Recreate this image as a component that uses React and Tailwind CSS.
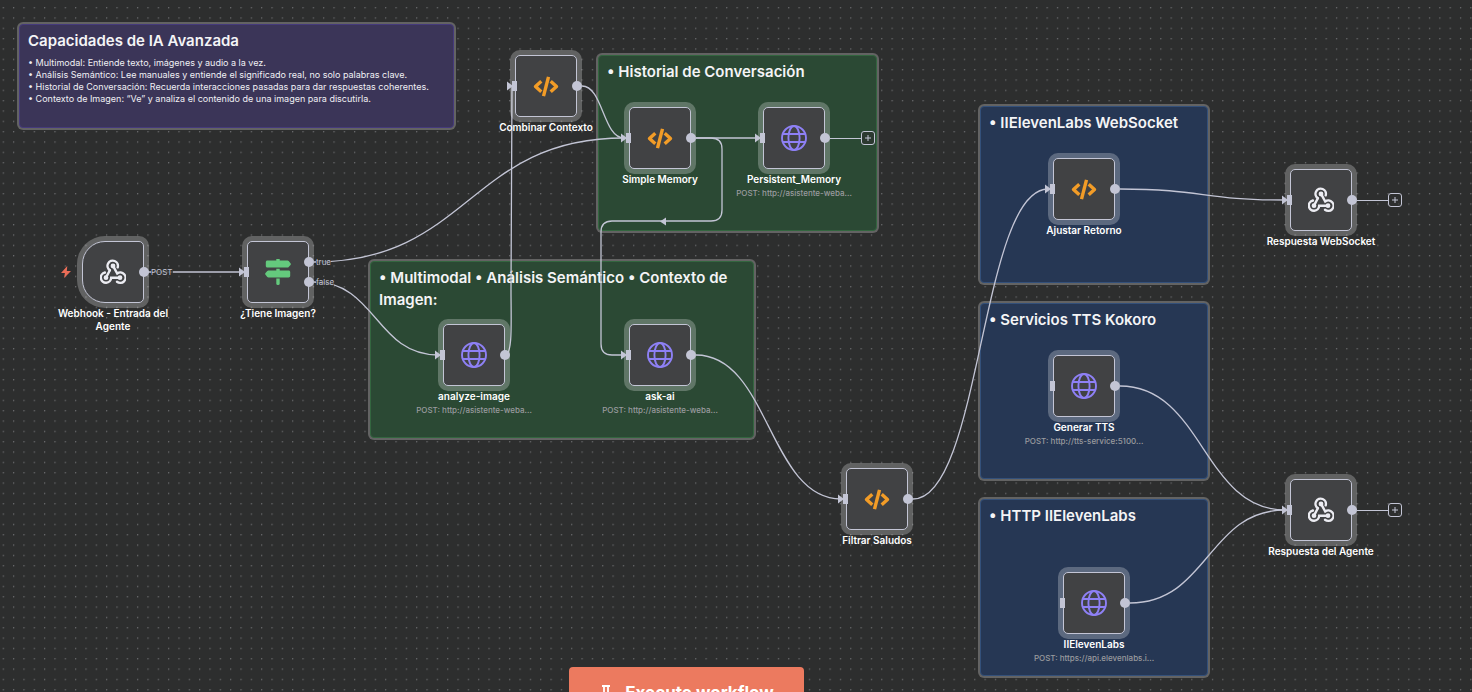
import React from "react";

const NODES = [
  { id: "webhook", x: 82, y: 241, icon: "webhook", label: "Webhook - Entrada del Agente", trigger: true, outputs: ["POST"] },
  { id: "if", x: 247, y: 241, icon: "signs", label: "¿Tiene Imagen?", outputs: ["true", "false"], arrow: true },
  { id: "combine", x: 515, y: 55, icon: "code", label: "Combinar Contexto", arrow: true },
  { id: "simple", x: 629, y: 107, icon: "code", label: "Simple Memory", arrow: true },
  { id: "persistent", x: 763, y: 107, icon: "globe", label: "Persistent_Memory", sub: "POST: http://asistente-weba...", arrow: true, add: true },
  { id: "analyze", x: 443, y: 324, icon: "globe", label: "analyze-image", sub: "POST: http://asistente-weba...", arrow: true },
  { id: "ask", x: 629, y: 324, icon: "globe", label: "ask-ai", sub: "POST: http://asistente-weba...", arrow: true },
  { id: "filter", x: 846, y: 468, icon: "code", label: "Filtrar Saludos", arrow: true },
  { id: "adjust", x: 1053, y: 158, icon: "code", label: "Ajustar Retorno", arrow: true },
  { id: "tts", x: 1053, y: 355, icon: "globe", label: "Generar TTS", sub: "POST: http://tts-service:5100..." },
  { id: "eleven", x: 1063, y: 572, icon: "globe", label: "IIElevenLabs", sub: "POST: https://api.elevenlabs.i..." },
  { id: "replyWs", x: 1290, y: 169, icon: "webhook", label: "Respuesta WebSocket", arrow: true, add: true },
  { id: "reply", x: 1290, y: 479, icon: "webhook", label: "Respuesta del Agente", arrow: true, add: true },
];

const EDGES = [
  "M148 272 H242",
  "M314 262 C469 262 469 138 624 138",
  "M314 282 C376 282 376 355 438 355",
  "M582 86 C603 86 603 138 624 138",
  "M696 138 H758",
  "M696 138 H711 Q722 138 722 149 V210 Q722 221 711 221 H612 Q601 221 601 232 V344 Q601 355 612 355 H624",
  "M505 355 C513 355 511 320 511 290 L512 86",
  "M696 355 C769 355 769 499 841 499",
  "M913 499 C981 499 981 189 1048 189",
  "M1120 189 C1203 189 1203 200 1285 200",
  "M1120 386 C1203 386 1203 510 1285 510",
  "M1130 603 C1208 603 1208 510 1285 510",
];

function Icon({ name }) {
  if (name === "code")
    return (
      <svg viewBox="0 0 26 21" className="h-[21px] w-[26px]" fill="none" stroke="#f29c27" strokeWidth="3.400" aria-hidden="true">
        <path d="M8.300 5.200L2.500 10.500L8.300 15.800M17.700 5.200L23.500 10.500L17.700 15.800" strokeLinejoin="round" />
        <path d="M15.500 0.800L10.500 20.200" />
      </svg>
    );
  if (name === "globe")
    return (
      <svg viewBox="0 0 26 26" className="size-[26px]" fill="none" stroke="#8e80f5" strokeWidth="1.900" aria-hidden="true">
        <circle cx="13" cy="13" r="12" />
        <ellipse cx="13" cy="13" rx="5.600" ry="12" />
        <path d="M1.700 9h22.600M1.700 17h22.600" />
      </svg>
    );
  if (name === "signs")
    return (
      <svg viewBox="0 0 26 26" className="size-[26px]" fill="#64ca7d" aria-hidden="true">
        <path d="M11.300 0h3.400v1.600h7.900c.4 0 .8.200 1.100.5l1.800 2.100c.5.500.5 1.200 0 1.700l-1.800 2c-.3.400-.7.600-1.100.6H2.400c-.9 0-1.600-.7-1.600-1.500V3.200c0-.9.700-1.600 1.600-1.600h8.900zM11.300 9.800h3.400v1.700h8.900c.9 0 1.600.7 1.600 1.600v3.700c0 .9-.7 1.600-1.600 1.600H3.400c-.4 0-.8-.2-1.100-.5L.5 15.800c-.5-.5-.5-1.200 0-1.700l1.800-2.100c.3-.3.700-.5 1.100-.5h7.900zM11.300 19.600h3.400v5.200c0 .7-.5 1.200-1.200 1.200h-1c-.7 0-1.200-.5-1.200-1.200z" />
      </svg>
    );
  return (
    <svg viewBox="0 0 26 26" className="size-[26px]" fill="none" stroke="#ececf2" strokeWidth="2.400" strokeLinecap="round" aria-hidden="true">
      <path d="M17.700 8.300A5.200 5.200 0 1 0 9.900 11.200" />
      <path d="M9.900 11.200L6.100 18.400" />
      <path d="M4.900 13.500A5.200 5.200 0 1 0 11.200 18.800H19.600" />
      <path d="M17 22.700A5.200 5.200 0 1 0 17.200 14.500L13.200 7.100" />
      <circle cx="13" cy="7" r="1.200" fill="#ececf2" />
      <circle cx="6" cy="18.700" r="1.200" fill="#ececf2" />
      <circle cx="20" cy="18.700" r="1.200" fill="#ececf2" />
    </svg>
  );
}

function Inputs({ arrow }) {
  return (
    <div className="absolute inset-y-0 right-full -mr-px flex items-center">
      {arrow && (
        <svg viewBox="0 0 6 10" className="-mr-px h-[10px] w-[6px]" fill="#c3c5d5" aria-hidden="true">
          <path d="M0 0.500L6 5L0 9.500z" />
        </svg>
      )}
      <span className="h-[10px] w-[5px] bg-[#c3c5d5]" />
    </div>
  );
}

function Outputs({ node }) {
  return (
    <div className="absolute inset-y-0 left-full -ml-[4px] flex flex-col justify-center gap-[10px]">
      {(node.outputs ?? [""]).map((name) => (
        <div key={name} className="flex h-[10px] items-center">
          <span className="size-[10px] rounded-full bg-[#c3c5d5]" />
          {name && (
            <span className="ml-[2px] bg-[#2d2e2e]/80 text-[8px] leading-[10px] text-[#c3c5d5]">{name}</span>
          )}
          {node.add && (
            <>
              <span className="h-px w-[31px] bg-[#c3c5d5]" />
              <button
                type="button"
                aria-label={"Añadir nodo después de " + node.label}
                className="flex size-[14px] items-center justify-center rounded-[3px] border border-[#c3c5d5] bg-[#2d2e2e]/60"
              >
                <svg viewBox="0 0 6 6" className="size-[6px]" stroke="#c3c5d5" strokeWidth="1" aria-hidden="true">
                  <path d="M3 0V6M0 3H6" />
                </svg>
              </button>
            </>
          )}
        </div>
      ))}
    </div>
  );
}

function Node({ node }) {
  return (
    <article className="absolute flex w-[142px] -translate-x-[40px] flex-col items-center" style={{ left: node.x, top: node.y }}>
      <div
        className={
          "relative flex size-[62px] items-center justify-center border border-[#c3c5d5] bg-[#414244] shadow-[0_0_0_5px_rgba(255,255,255,0.25)] " +
          (node.trigger ? "rounded-l-[23px] rounded-r-[5px]" : "rounded-[5px]")
        }
      >
        {node.trigger ? (
          <div className="absolute inset-y-0 right-full mr-[12px] flex items-center">
            <svg viewBox="0 0 10 12" className="h-[12px] w-[10px]" fill="#ea6d57" aria-hidden="true">
              <path d="M6.300 0L0 6.900h3.900L3.100 12L10 4.900H5.800z" />
            </svg>
          </div>
        ) : (
          <Inputs arrow={node.arrow} />
        )}
        <Icon name={node.icon} />
        <Outputs node={node} />
      </div>
      <h3 className="mt-[4px] max-w-[120px] text-center text-[10px] leading-[13px] font-semibold text-white">{node.label}</h3>
      {node.sub && <p className="mt-px text-[8px] leading-[12px] font-medium whitespace-nowrap text-[#9a9b9f]">{node.sub}</p>}
    </article>
  );
}

function Sticky({ place, title, children }) {
  return (
    <section className={"absolute rounded-[4px] border px-[8px] pt-[5px] shadow-[0_0_0_2px_#636363] " + place}>
      <h2 className="text-[15px] leading-[22px] font-semibold text-[#f4f4f6]">{title}</h2>
      {children}
    </section>
  );
}

const GREEN = " border-[#33663f] bg-[#2b4934]";
const BLUE = " border-[#33507a] bg-[#263754]";

export default function App() {
  return (
    <main className="relative h-screen w-full overflow-hidden bg-[#2d2e2e] font-['Inter',sans-serif]">
      <svg className="absolute inset-0 size-full" aria-hidden="true">
        <defs>
          <pattern id="grid" x="2.700" y="7" width="10.335" height="10.335" patternUnits="userSpaceOnUse">
            <circle cx="0.650" cy="0.650" r="0.650" fill="#77787b" />
          </pattern>
        </defs>
        <rect width="100%" height="100%" fill="url(#grid)" />
      </svg>

      <Sticky place="left-[19px] top-[24px] h-[104px] w-[435px] border-[#453a7c] bg-[#3b3558]" title="Capacidades de IA Avanzada">
        <ul className="mt-[5px] text-[9px] leading-[12px] text-[#f0f0f4]">
          <li>• Multimodal: Entiende texto, imágenes y audio a la vez.</li>
          <li>• Análisis Semántico: Lee manuales y entiende el significado real, no solo palabras clave.</li>
          <li>• Historial de Conversación: Recuerda interacciones pasadas para dar respuestas coherentes.</li>
          <li>• Contexto de Imagen: “Ve” y analiza el contenido de una imagen para discutirla.</li>
        </ul>
      </Sticky>
      <Sticky place={"left-[598px] top-[55px] h-[176px] w-[279px]" + GREEN} title="• Historial de Conversación" />
      <Sticky place={"left-[370px] top-[261px] h-[177px] w-[384px]" + GREEN} title="• Multimodal • Análisis Semántico • Contexto de Imagen:" />
      <Sticky place={"left-[980px] top-[106px] h-[177px] w-[228px]" + BLUE} title="• IIElevenLabs WebSocket" />
      <Sticky place={"left-[980px] top-[303px] h-[176px] w-[228px]" + BLUE} title="• Servicios TTS Kokoro" />
      <Sticky place={"left-[980px] top-[499px] h-[177px] w-[228px]" + BLUE} title="• HTTP IIElevenLabs" />

      <svg className="absolute inset-0 size-full" fill="none" stroke="#c3c5d5" strokeWidth="1.300" aria-hidden="true">
        {EDGES.map((d) => (
          <path key={d} d={d} />
        ))}
        <path d="M660 221.500L666 217.500V225.500Z" fill="#c3c5d5" stroke="none" />
      </svg>

      {NODES.map((node) => (
        <Node key={node.id} node={node} />
      ))}

      <button
        type="button"
        className="absolute top-[667px] left-[569px] flex h-[54px] w-[235px] items-center justify-center gap-[12px] rounded-[4px] bg-[#ec7a5f] text-[17px] font-bold text-white"
      >
        <svg viewBox="0 0 14 18" className="h-[18px] w-[14px]" fill="none" stroke="currentColor" strokeWidth="1.800" aria-hidden="true">
          <path d="M3 1h8M5 1v6L1.500 15.500Q1.200 17 2.600 17h8.800q1.400 0 1.100-1.500L9 7V1" />
        </svg>
        Execute workflow
      </button>
    </main>
  );
}
